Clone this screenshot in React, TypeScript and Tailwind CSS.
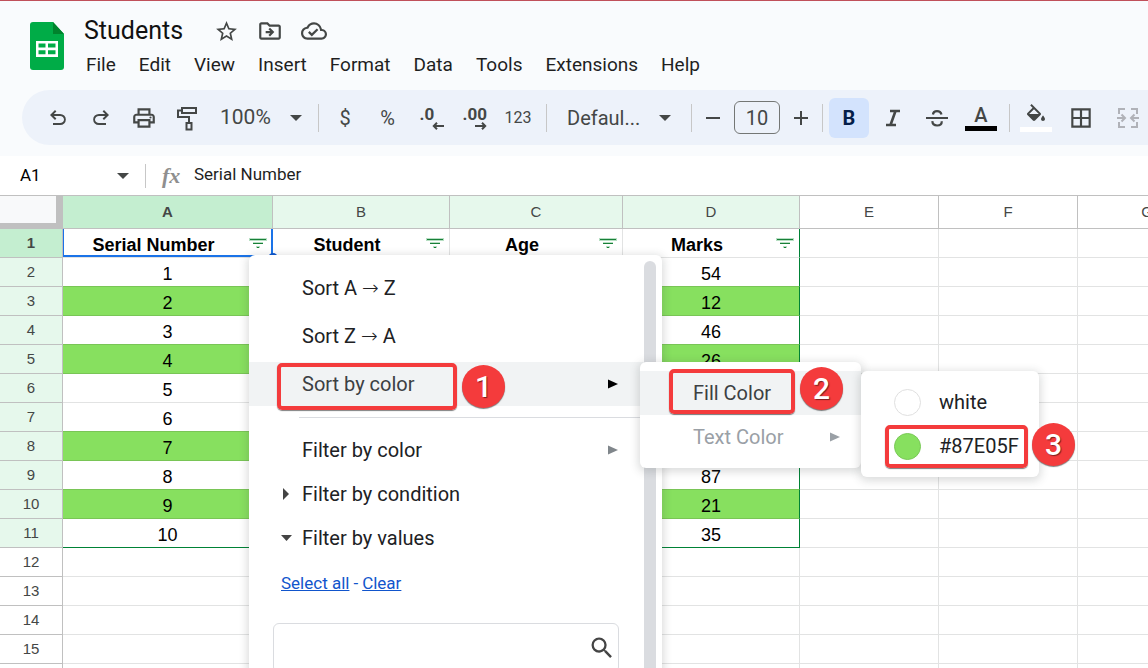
import React from "react";
import {
  MdBorderAll,
  MdFormatColorFill,
  MdOutlineCloudDone,
  MdOutlineDriveFileMove,
  MdOutlinePrint,
  MdSearch,
  MdStarOutline,
} from "react-icons/md";

const MENUS = ["File", "Edit", "View", "Insert", "Format", "Data", "Tools", "Extensions", "Help"];

type Row = { serial?: string; marks?: string; filled?: boolean };

const ROWS: Row[] = [
  { serial: "1", marks: "54" },
  { serial: "2", marks: "12", filled: true },
  { serial: "3", marks: "46" },
  { serial: "4", marks: "26", filled: true },
  { serial: "5" },
  { serial: "6" },
  { serial: "7", filled: true },
  { serial: "8", marks: "87" },
  { serial: "9", marks: "21", filled: true },
  { serial: "10", marks: "35" },
  {},
  {},
  {},
  {},
];

const COLUMNS = ["A", "B", "C", "D", "E", "F", "G"];

function SheetsLogo() {
  return (
    <svg viewBox="0 0 34 48" className="h-12 w-[34px] shrink-0" aria-hidden="true">
      <path d="M3 0h20l11 12v33a3 3 0 0 1-3 3H3a3 3 0 0 1-3-3V3a3 3 0 0 1 3-3z" fill="#00ac47" />
      <path d="M23 0l11 12H23z" fill="#00832d" />
      <path
        d="M6 19h22v16H6zM8.500 21.500v4h7v-4zM18 21.500v4h7.500v-4zM8.500 28.200v4h7v-4zM18 28.200v4h7.500v-4z"
        fill="#fff"
        fillRule="evenodd"
      />
    </svg>
  );
}

function Caret({ className = "" }: { className?: string }) {
  return (
    <svg viewBox="0 0 12 6" className={`h-1.5 w-3 shrink-0 ${className}`} aria-hidden="true">
      <path d="M0 0h12L6 6z" fill="#444746" />
    </svg>
  );
}

function UndoIcon() {
  return (
    <svg viewBox="0 -960 960 960" className="size-6" fill="currentColor" aria-hidden="true">
      <path d="M280-200v-80h284q63 0 109.500-40T720-420q0-60-46.500-100T564-560H312l104 104-56 56-200-200 200-200 56 56-104 104h252q97 0 163.500 63T794-420q0 94-66.500 157T564-200H280Z" />
    </svg>
  );
}

function RedoIcon() {
  return (
    <svg viewBox="0 -960 960 960" className="size-6" fill="currentColor" aria-hidden="true">
      <path d="M396-200q-97 0-163.500-63T166-420q0-94 66.500-157T396-640h252L544-744l56-56 200 200-200 200-56-56 104-104H396q-63 0-109.500 40T240-420q0 60 46.500 100T396-280h284v80H396Z" />
    </svg>
  );
}

function RollerIcon() {
  return (
    <svg viewBox="0 0 24 26" className="h-[26px] w-6" fill="none" stroke="currentColor" strokeWidth="2" aria-hidden="true">
      <path d="M7 3h14v5H7zM7 5.500H3V12h11v6" />
      <path d="M11.500 18h5v6.500h-5z" />
    </svg>
  );
}

function ItalicIcon() {
  return (
    <svg viewBox="0 0 16 18" className="h-[18px] w-4" fill="none" stroke="currentColor" strokeWidth="2.600" aria-hidden="true">
      <path d="M5 2h10M1 16h10M10.500 2l-5 14" />
    </svg>
  );
}

function StrikeIcon() {
  return (
    <svg viewBox="0 0 22 20" className="h-5 w-[22px]" fill="none" stroke="currentColor" strokeWidth="2.200" aria-hidden="true">
      <path d="M0 10h22" strokeWidth="2" />
      <path d="M15.500 6.500C14.800 4 13.200 3.200 11 3.200S7.300 4.200 6.900 6.500M6.300 13.200c.2 2.800 2 4.300 4.800 4.300s4.700-1.600 4.700-4.300" />
    </svg>
  );
}

function MergeIcon() {
  return (
    <svg viewBox="0 0 22 20" className="h-5 w-[22px]" fill="none" stroke="currentColor" strokeWidth="2" aria-hidden="true">
      <path d="M8 1H2v5M2 14v5h6M14 1h6v5M20 14v5h-6" />
      <path d="M0 10h7M22 10h-7M4.500 6.500L8 10l-3.500 3.500M17.500 6.500L14 10l3.500 3.500" />
    </svg>
  );
}

function DecimalIcon({ digits, direction }: { digits: string; direction: "left" | "right" }) {
  return (
    <span className="flex w-6 flex-col items-start">
      <span className="text-[17px] leading-4 font-bold">{digits}</span>
      <svg viewBox="0 0 12 8" className="h-2 w-3 self-end" fill="none" stroke="currentColor" strokeWidth="2" aria-hidden="true">
        {direction === "left" ? <path d="M12 4H2M5 .800L1.800 4 5 7.200" /> : <path d="M0 4h10M7 .800L10.200 4 7 7.200" />}
      </svg>
    </span>
  );
}

function FilterIcon() {
  return (
    <svg viewBox="0 0 18 12" className="h-3 w-[18px]" shapeRendering="crispEdges" aria-hidden="true">
      <path d="M0 1h18v3H0zM4 5h10v2H4zM7 9h4v2H7z" fill="#b7dfc3" />
      <path d="M1 2h16v1H1zM4 6h10v1H4zM8 10h2v1H8z" fill="#188038" />
    </svg>
  );
}

function ToolButton({ label, className = "w-[43px]", children }: { label: string; className?: string; children: React.ReactNode }) {
  return (
    <button type="button" aria-label={label} className={`flex h-10 shrink-0 items-center justify-center ${className}`}>
      {children}
    </button>
  );
}

function Divider() {
  return <span className="mx-1.5 h-7 w-px shrink-0 bg-[#c7c7c7]" />;
}

function Header() {
  return (
    <header className="shrink-0 border-t border-[#c0505a] bg-[#f9fbfd] pb-[11px]">
      <div className="flex h-[89px] items-start gap-5 pl-[30px]">
        <div className="pt-[21px]">
          <SheetsLogo />
        </div>
        <div className="flex flex-col pt-3">
          <div className="flex h-9 items-center text-[#444746]">
            <input
              aria-label="Document title"
              defaultValue="Students"
              className="w-[130px] bg-transparent text-[25px] leading-8 text-[#111] outline-none"
            />
            <div className="flex items-center gap-[18px]">
              <button type="button" aria-label="Star">
                <MdStarOutline size={25} />
              </button>
              <button type="button" aria-label="Move">
                <MdOutlineDriveFileMove size={26} />
              </button>
              <button type="button" aria-label="Saved to Drive">
                <MdOutlineCloudDone size={26} />
              </button>
            </div>
          </div>
          <nav className="flex h-8 items-center gap-[23px] pl-0.5 text-[19px] text-[#1f1f1f]">
            {MENUS.map((menu) => (
              <button type="button" key={menu}>
                {menu}
              </button>
            ))}
          </nav>
        </div>
      </div>
      <div
        role="toolbar"
        aria-label="Formatting"
        className="ml-[22px] flex h-[55px] items-center overflow-hidden rounded-l-full bg-[#edf2fa] pl-3.5 text-[#444746]"
      >
        <ToolButton label="Undo">
          <UndoIcon />
        </ToolButton>
        <ToolButton label="Redo">
          <RedoIcon />
        </ToolButton>
        <ToolButton label="Print">
          <MdOutlinePrint size={26} />
        </ToolButton>
        <ToolButton label="Paint format">
          <RollerIcon />
        </ToolButton>
        <div className="flex w-[104px] shrink-0 items-center pl-3">
          <select aria-label="Zoom" className="w-[70px] appearance-none bg-transparent text-[21px] outline-none">
            <option>100%</option>
          </select>
          <Caret />
        </div>
        <Divider />
        <ToolButton label="Format as currency" className="w-10">
          <span className="text-xl">$</span>
        </ToolButton>
        <ToolButton label="Format as percent" className="w-[45px]">
          <span className="text-xl">%</span>
        </ToolButton>
        <ToolButton label="Decrease decimal places">
          <DecimalIcon digits=".0" direction="left" />
        </ToolButton>
        <ToolButton label="Increase decimal places">
          <DecimalIcon digits=".00" direction="right" />
        </ToolButton>
        <ToolButton label="More formats" className="w-11">
          <span className="text-base">123</span>
        </ToolButton>
        <Divider />
        <div className="flex w-[132px] shrink-0 items-center pl-3.5">
          <select aria-label="Font" className="w-[92px] appearance-none bg-transparent text-xl outline-none">
            <option>Defaul...</option>
          </select>
          <Caret />
        </div>
        <Divider />
        <div className="flex shrink-0 items-center gap-1.5">
          <ToolButton label="Decrease font size" className="w-[30px]">
            <span className="h-0.5 w-3.5 bg-[#444746]" />
          </ToolButton>
          <input
            aria-label="Font size"
            defaultValue="10"
            className="h-[33px] w-[46px] rounded-md border border-[#747775] bg-transparent text-center text-xl outline-none"
          />
          <ToolButton label="Increase font size" className="w-[30px]">
            <svg viewBox="0 0 14 14" className="size-3.5" stroke="currentColor" strokeWidth="2" aria-hidden="true">
              <path d="M0 7h14M7 0v14" />
            </svg>
          </ToolButton>
        </div>
        <Divider />
        <ToolButton label="Bold" className="mr-0.5 w-10 rounded-md bg-[#d3e3fd] text-xl font-bold text-[#041e49]">
          B
        </ToolButton>
        <ToolButton label="Italic" className="w-11">
          <ItalicIcon />
        </ToolButton>
        <ToolButton label="Strikethrough" className="w-11">
          <StrikeIcon />
        </ToolButton>
        <ToolButton label="Text color" className="w-11">
          <span className="flex flex-col items-center">
            <span className="text-xl leading-5 font-medium">A</span>
            <span className="mt-px h-[5px] w-8 bg-black" />
          </span>
        </ToolButton>
        <Divider />
        <ToolButton label="Fill color" className="w-10">
          <span className="flex flex-col items-center">
            <MdFormatColorFill size={24} viewBox="0 0 24 20" className="h-5 w-6" />
            <span className="mt-[3px] h-[5px] w-8 bg-white" />
          </span>
        </ToolButton>
        <ToolButton label="Borders" className="w-[50px]">
          <MdBorderAll size={26} />
        </ToolButton>
        <ToolButton label="Merge cells" className="w-11 text-[#b0b2b8]">
          <MergeIcon />
        </ToolButton>
      </div>
    </header>
  );
}

function FormulaBar() {
  return (
    <div className="flex h-[39px] shrink-0 items-center bg-white">
      <input aria-label="Name box" defaultValue="A1" className="w-[117px] bg-transparent pl-5 text-[17px] text-black outline-none" />
      <Caret />
      <span className="mr-4 ml-4 h-6 w-px bg-[#c7c7c7]" />
      <span className="w-8 font-['Liberation_Serif',serif] text-[22px] leading-6 font-bold text-[#8f8f8f] italic">fx</span>
      <input
        aria-label="Formula"
        defaultValue="Serial Number"
        className="flex-1 bg-transparent pb-0.5 text-[17px] text-[#1f1f1f] outline-none"
      />
    </div>
  );
}

function HeadingCell({ title, selected = false, last = false }: { title: string; selected?: boolean; last?: boolean }) {
  return (
    <td className={`relative border-r border-b border-b-[#e2e3e3] p-0 ${last ? "border-r-green-700" : "border-r-[#e2e3e3]"}`}>
      <div className="flex items-center gap-[5px] pr-[5px]">
        <span className="flex-1 pt-1 text-center text-lg leading-6 font-bold">{title}</span>
        <button type="button" aria-label={`Filter ${title}`}>
          <FilterIcon />
        </button>
      </div>
      {selected && (
        <>
          <span className="absolute inset-y-0 left-0 -right-px border-r-2 border-b-2 border-l border-[#1a73e8]" />
          <span className="absolute -right-1.5 -bottom-1.5 size-2.5 rounded-full bg-[#0b57d0]" />
        </>
      )}
    </td>
  );
}

function Sheet() {
  return (
    <table className="w-[1217px] table-fixed border-separate border-spacing-0 border-t border-[#c0c0c0] font-['Liberation_Sans',sans-serif] text-black">
      <colgroup>
        <col className="w-[63px]" />
        <col className="w-[210px]" />
        <col className="w-[177px]" />
        <col className="w-[173px]" />
        <col className="w-[177px]" />
        <col className="w-[139px]" />
        <col className="w-[139px]" />
        <col className="w-[139px]" />
      </colgroup>
      <thead>
        <tr className="h-[33px] text-[15px] text-[#444746]">
          <td className="border-r-[7px] border-b-[6px] border-[#c0c0c0] bg-[#f8f9fa] p-0" />
          {COLUMNS.map((name, i) => (
            <th
              key={name}
              scope="col"
              className={`border-r border-b border-[#c0c0c0] p-0 ${
                i === 0 ? "bg-[#c4eed0] font-bold" : i < 4 ? "bg-[#e6f8ec] font-normal" : "bg-white font-normal"
              }`}
            >
              {name}
            </th>
          ))}
        </tr>
      </thead>
      <tbody>
        <tr className="h-[29px]">
          <th scope="row" className="border-r border-b border-[#c0c0c0] bg-[#c4eed0] p-0 text-[15px] text-[#444746]">
            1
          </th>
          <HeadingCell title="Serial Number" selected />
          <HeadingCell title="Student" />
          <HeadingCell title="Age" />
          <HeadingCell title="Marks" last />
          {["E", "F", "G"].map((c) => (
            <td key={c} className="border-r border-b border-[#e2e3e3] p-0" />
          ))}
        </tr>
        {ROWS.map((row, i) => {
          const inRange = i < 10;
          const bottom =
            i === 9
              ? "border-b-green-700"
              : row.filled || ROWS[i + 1]?.filled
                ? "border-b-[#79c556]"
                : "border-b-[#e2e3e3]";
          const right = row.filled ? "border-r-[#87e05f]" : "border-r-[#e2e3e3]";
          const fill = row.filled ? "bg-[#87e05f]" : "bg-white";
          return (
            <tr key={i} className="h-[29px]">
              <th
                scope="row"
                className={`border-r border-b border-[#c0c0c0] p-0 text-[15px] font-normal text-[#444746] ${
                  inRange ? "bg-[#e6f8ec]" : "bg-white"
                }`}
              >
                {i + 2}
              </th>
              <td className={`border-r border-b p-0 pt-1 text-center text-lg leading-6 ${fill} ${right} ${bottom}`}>{row.serial}</td>
              <td className={`border-r border-b p-0 ${fill} ${right} ${bottom}`} />
              <td className={`border-r border-b p-0 ${fill} ${right} ${bottom}`} />
              <td
                className={`border-r border-b p-0 pt-1 text-center text-lg leading-6 ${fill} ${bottom} ${
                  inRange ? "border-r-green-700" : "border-r-[#e2e3e3]"
                }`}
              >
                {row.marks}
              </td>
              {["E", "F", "G"].map((c) => (
                <td key={c} className="border-r border-b border-[#e2e3e3] p-0" />
              ))}
            </tr>
          );
        })}
        <tr className="h-[29px]">
          <th aria-hidden="true" className="border-r border-[#c0c0c0] p-0" />
          {COLUMNS.map((c) => (
            <td key={c} className="border-r border-[#e2e3e3] p-0" />
          ))}
        </tr>
      </tbody>
    </table>
  );
}

function RightArrow({ className }: { className: string }) {
  return (
    <svg viewBox="0 0 10 10" className={`size-2.5 ${className}`} fill="currentColor" aria-hidden="true">
      <path d="M0 .500l10 4.500-10 4.500z" />
    </svg>
  );
}

function Step({ number, className }: { number: string; className: string }) {
  return (
    <span
      className={`absolute flex size-[43px] items-center justify-center rounded-full bg-[#f43b3c] text-[30px] leading-none font-medium text-white shadow-[0_1px_1px_rgba(0,0,0,0.5)] text-shadow-[1px_1px_1px_rgb(0_0_0/0.5)] ${className}`}
    >
      {number}
    </span>
  );
}

function Outline({ className }: { className: string }) {
  return (
    <span
      className={`pointer-events-none absolute rounded-[5px] border-4 border-[#f43b3c] shadow-[0_1px_1px_rgba(0,0,0,0.5)] ${className}`}
    />
  );
}

function SortDirection({ from, to }: { from: string; to: string }) {
  return (
    <button type="button" role="menuitem" className="h-11 pl-[53px] text-left leading-6">
      Sort {from} <span className="font-['DejaVu_Sans',sans-serif] font-extralight">→</span> {to}
    </button>
  );
}

function FilterMenu() {
  return (
    <div
      role="menu"
      className="absolute top-[60px] left-[249px] w-[413px] rounded-t-md bg-white pt-[11px] text-xl text-[#202124] shadow-[0_2px_8px_2px_rgba(60,64,67,0.18)]"
    >
      <div className="flex flex-col gap-1">
        <SortDirection from="A" to="Z" />
        <SortDirection from="Z" to="A" />
        <button type="button" role="menuitem" className="flex h-11 w-[395px] items-center justify-between bg-[#f1f3f4] pr-[26px] pl-[53px] text-[#3c4043]">
          Sort by color
          <RightArrow className="text-black" />
        </button>
      </div>
      <hr className="mt-[11px] mr-[18px] ml-[50px] border-[#dadce0]" />
      <div className="mt-2.5 flex w-[395px] flex-col">
        <button type="button" role="menuitem" className="flex h-11 items-center justify-between pr-[26px] pl-[53px]">
          Filter by color
          <RightArrow className="text-[#80868b]" />
        </button>
        <button type="button" role="menuitem" className="flex h-11 items-center pl-[34px]">
          <svg viewBox="0 0 6 12" className="mr-[13px] h-3 w-1.5" aria-hidden="true">
            <path d="M0 0l6 6-6 6z" fill="#444" />
          </svg>
          Filter by condition
        </button>
        <button type="button" role="menuitem" className="flex h-11 items-center pl-8">
          <svg viewBox="0 0 11 6" className="mr-2.5 h-1.5 w-[11px]" aria-hidden="true">
            <path d="M0 0h11L5.500 6z" fill="#444" />
          </svg>
          Filter by values
        </button>
        <p className="flex h-12 items-center gap-1 pl-8 text-[17px] text-[#1155cc]">
          <a href="#select-all" className="underline">
            Select all
          </a>
          <span>-</span>
          <a href="#clear" className="underline">
            Clear
          </a>
        </p>
        <div className="mt-[15px] ml-6 flex h-[50px] w-[346px] items-center rounded-md border border-[#dadce0] pr-0.5">
          <input aria-label="Search values" className="min-w-0 flex-1 bg-transparent pl-3 outline-none" />
          <MdSearch size={28} className="text-[#444]" aria-hidden="true" />
        </div>
      </div>
      <span className="absolute top-1.5 right-1.5 bottom-0 w-3 rounded-t-full bg-[#dadce0]" />
      <Outline className="top-[108px] left-7 h-[47px] w-[180px]" />
      <Step number="1" className="top-[110px] left-[213px]" />
    </div>
  );
}

function SortByColorMenu() {
  return (
    <div
      role="menu"
      className="absolute top-[167px] left-[640px] w-[221px] rounded-md bg-white py-[9px] text-xl shadow-[0_2px_8px_2px_rgba(60,64,67,0.18)]"
    >
      <button type="button" role="menuitem" className="flex h-11 w-full items-center bg-[#f1f3f4] pl-[53px] text-[#3c4043]">
        Fill Color
      </button>
      <button type="button" role="menuitem" disabled className="flex h-11 w-full items-center justify-between pr-[21px] pl-[53px] text-[#9aa0a6]">
        Text Color
        <RightArrow className="text-[#9aa0a6]" />
      </button>
      <Outline className="top-[7px] left-[29px] h-[45px] w-[126px]" />
      <Step number="2" className="top-[5px] left-40" />
    </div>
  );
}

function FillColorMenu() {
  return (
    <div
      role="menu"
      className="absolute top-[176px] left-[861px] w-[178px] rounded-md bg-white py-[9px] text-xl text-[#202124] shadow-[0_2px_8px_2px_rgba(60,64,67,0.18)]"
    >
      <button type="button" role="menuitem" className="flex h-11 w-full items-center gap-[18px] pl-[33px]">
        <span className="size-[27px] rounded-full border border-[#e0e0e0] bg-white" />
        white
      </button>
      <button type="button" role="menuitem" className="flex h-11 w-full items-center gap-[18px] pl-[33px]">
        <span className="size-[27px] rounded-full border border-[#79c956] bg-[#87e05f]" />
        #87E05F
      </button>
      <Outline className="top-[54px] left-6 h-[43px] w-[143px]" />
      <Step number="3" className="top-[52px] left-[171px]" />
    </div>
  );
}

export default function App() {
  return (
    <div className="flex h-screen flex-col overflow-hidden bg-white font-[Roboto,sans-serif]">
      <Header />
      <FormulaBar />
      <main className="relative min-h-0 flex-1 overflow-hidden">
        <Sheet />
        <FilterMenu />
        <SortByColorMenu />
        <FillColorMenu />
      </main>
    </div>
  );
}
